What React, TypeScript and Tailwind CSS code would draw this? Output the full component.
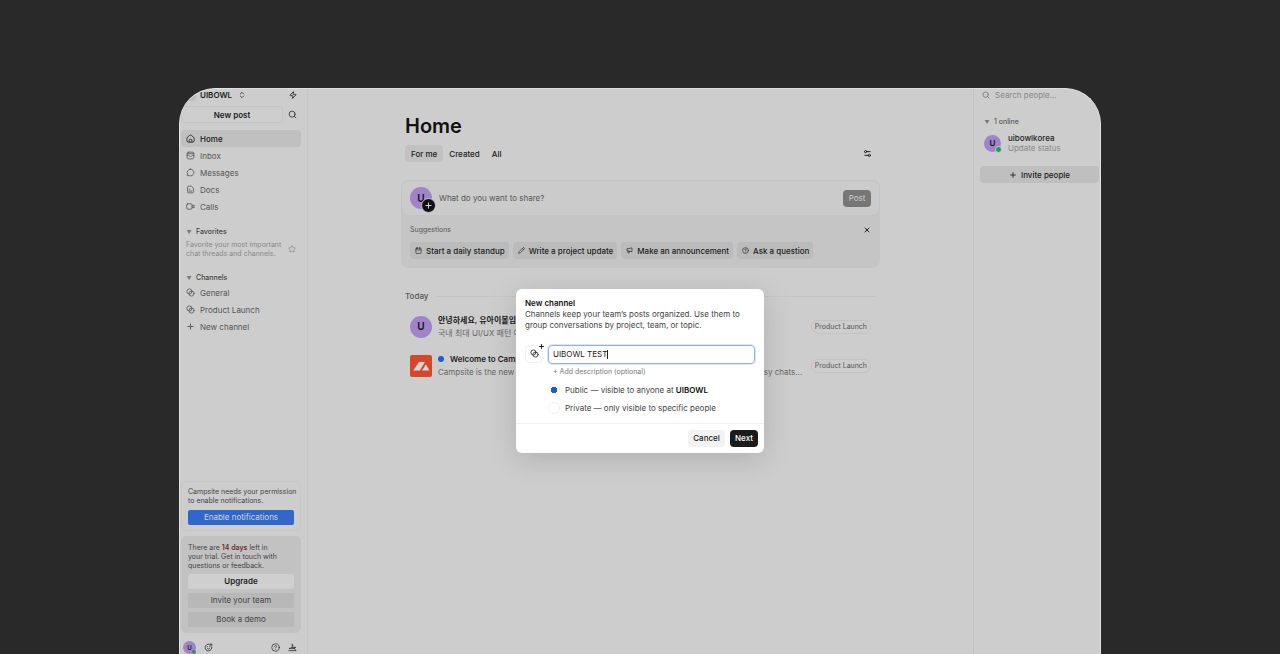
import { useState } from "react";
import type { ReactNode } from "react";
import {
  Calendar,
  ChevronsUpDown,
  CircleHelp,
  Pencil,
  Plus,
  Search,
  Settings2,
  Star,
  X,
  Zap,
} from "lucide-react";

interface IconProps {
  size?: number;
  children: ReactNode;
}

function Icon({ size = 9, children }: IconProps) {
  return (
    <svg
      width={size}
      height={size}
      viewBox="0 0 20 20"
      fill="none"
      stroke="currentColor"
      strokeWidth="1.8"
      strokeLinecap="round"
      strokeLinejoin="round"
      className="shrink-0"
      aria-hidden="true"
    >
      {children}
    </svg>
  );
}

function HomeIcon() {
  return (
    <Icon>
      <path d="M2 9.500a3 3 0 0 1 1.100-2.300l5-4.100a3 3 0 0 1 3.800 0l5 4.100A3 3 0 0 1 18 9.500V15a3 3 0 0 1-3 3H5a3 3 0 0 1-3-3z" />
      <path d="M7 18v-3.500a3 3 0 0 1 6 0V18" />
    </Icon>
  );
}

function InboxIcon() {
  return (
    <Icon>
      <rect x="2.500" y="2.500" width="15" height="15" rx="3.500" />
      <path d="M2.500 9.500h3.500c.8 0 1 2.700 4 2.700s3.200-2.700 4-2.700h3.500M3 6h14" />
    </Icon>
  );
}

function MessageIcon() {
  return (
    <Icon>
      <path d="M10 2.500a7.500 7.500 0 1 1-3.300 14.200L2.800 17.400l.8-3.700A7.500 7.500 0 0 1 10 2.500z" />
    </Icon>
  );
}

function DocIcon() {
  return (
    <Icon>
      <path d="M11 2.500H6A2.500 2.500 0 0 0 3.500 5v10A2.500 2.500 0 0 0 6 17.500h8a2.500 2.500 0 0 0 2.500-2.500V8z" />
      <path d="M7 9.500h1.500M7 13.500h6" />
    </Icon>
  );
}

function CallIcon() {
  return (
    <Icon>
      <rect x="1.500" y="4" width="12" height="12" rx="2.500" />
      <path d="M13.500 9 18 7v6l-4.500-2" />
    </Icon>
  );
}

function ChannelIcon() {
  return (
    <Icon>
      <circle cx="7.700" cy="7.700" r="5.700" />
      <circle cx="12.300" cy="12.300" r="5.700" />
    </Icon>
  );
}

function AnnounceIcon() {
  return (
    <Icon size={7}>
      <path d="M6 4.500 17 2.500v11l-11-2H4.500a2 2 0 0 1-2-2v-3a2 2 0 0 1 2-2zM5.500 11.500v4a2 2 0 0 0 4 0v-3" />
    </Icon>
  );
}

function StatusIcon() {
  return (
    <Icon>
      <path d="M11.500 2.700A7.500 7.500 0 1 0 17.300 8.500M15.500 1.500v5M13 4h5" />
      <path d="M7 12c1.500 2 4.500 2 6 0M7.500 8v.3M12.500 8v.3" />
    </Icon>
  );
}

function CampsiteIcon() {
  return (
    <Icon>
      <path d="M9.500 2.500v8M9.500 4l3 3M3 12l6.500-2H17M3 12.500h11l4 4.500H2M14 12.500l3-2.500" />
    </Icon>
  );
}

interface AvatarProps {
  className: string;
  children?: ReactNode;
}

function Avatar({ className, children }: AvatarProps) {
  return (
    <div
      className={`relative flex shrink-0 items-center justify-center rounded-full bg-[#a183cb] font-semibold text-[#111] ${className}`}
    >
      U{children}
    </div>
  );
}

const navItems = [
  { label: "Home", icon: <HomeIcon />, active: true },
  { label: "Inbox", icon: <InboxIcon /> },
  { label: "Messages", icon: <MessageIcon /> },
  { label: "Docs", icon: <DocIcon /> },
  { label: "Calls", icon: <CallIcon /> },
];

const channels = [
  { label: "General", icon: <ChannelIcon /> },
  { label: "Product Launch", icon: <ChannelIcon /> },
  { label: "New channel", icon: <Plus size={9} strokeWidth={2.5} /> },
];

const suggestions = [
  { label: "Start a daily standup", icon: <Calendar size={7} strokeWidth={2} /> },
  { label: "Write a project update", icon: <Pencil size={7} strokeWidth={2} /> },
  { label: "Make an announcement", icon: <AnnounceIcon /> },
  { label: "Ask a question", icon: <CircleHelp size={7} strokeWidth={2} /> },
];

interface NavLinkProps {
  label: string;
  icon: ReactNode;
  active?: boolean;
}

function NavLink({ label, icon, active }: NavLinkProps) {
  return (
    <a
      href="#"
      className={`flex h-[17px] items-center gap-[5px] rounded pl-[5px] ${
        active ? "bg-[#c0c0c0] font-medium text-[#1c1c1c]" : "text-[#555]"
      }`}
    >
      {icon}
      {label}
    </a>
  );
}

function GroupTitle({ children }: { children: ReactNode }) {
  return (
    <h2 className="flex h-[11px] items-center gap-[3px] pl-1 text-[7px] font-medium text-[#444]">
      <span className="w-2 text-center text-[5px] text-[#777]">▼</span>
      {children}
    </h2>
  );
}

function Sidebar() {
  return (
    <aside className="flex w-[128px] shrink-0 flex-col border-r border-[#c6c6c6] pr-1.5 pl-px">
      <div className="flex h-3 items-center pr-1 pl-1">
        <span className="flex size-[11px] items-center justify-center rounded-sm bg-[#bbb] text-[6px] text-[#8a4a3a]">
          U
        </span>
        <span className="ml-1 font-semibold text-[#1c1c1c]">UIBOWL</span>
        <ChevronsUpDown size={8} strokeWidth={2.5} className="ml-1.5 text-[#333]" />
        <Zap size={8} strokeWidth={2.5} className="ml-auto text-[#222]" />
      </div>

      <div className="mt-[5px] flex items-center justify-between pr-1">
        <button className="h-[17px] w-[102px] rounded border border-[#c4c4c4] bg-[#cecece] font-semibold text-[#1c1c1c]">
          New post
        </button>
        <Search size={9} className="text-[#222]" />
      </div>

      <nav className="mt-[7px]">
        {navItems.map((item) => (
          <NavLink key={item.label} {...item} />
        ))}
      </nav>

      <section className="mt-3">
        <GroupTitle>Favorites</GroupTitle>
        <div className="mt-0.5 flex items-center justify-between pr-[5px] pl-[5px] text-[7px] leading-[9px] text-[#888]">
          <p className="whitespace-nowrap">
            Favorite your most important
            <br />
            chat threads and channels.
          </p>
          <Star size={8} className="shrink-0" />
        </div>
      </section>

      <section className="mt-[15px]">
        <GroupTitle>Channels</GroupTitle>
        <nav>
          {channels.map((item) => (
            <NavLink key={item.label} {...item} />
          ))}
        </nav>
      </section>

      <div className="mt-auto rounded-md border border-[#c6c6c6] px-1.5 py-[5px] text-[7px] leading-[9px] text-[#444]">
        <p className="whitespace-nowrap">
          Campsite needs your permission
          <br />
          to enable notifications.
        </p>
        <button className="mt-[5px] h-[15px] w-full rounded-xs bg-[#2f67cb] text-[8px] text-[#d5d5d5]">
          Enable notifications
        </button>
      </div>

      <div className="mt-[5px] flex flex-col gap-1 rounded-md bg-[#c2c2c2] px-[7px] pt-[7px] pb-1.5 text-[7px] leading-[9px] text-[#444]">
        <p>
          There are <b className="font-semibold text-[#6b2d22]">14 days</b> left in
          <br />
          your trial. Get in touch with
          <br />
          questions or feedback.
        </p>
        <button className="h-[15px] rounded-xs bg-[#cfcfcf] text-[8px] font-semibold text-[#1c1c1c]">
          Upgrade
        </button>
        <button className="h-[15px] rounded-xs bg-[#b8b8b8] text-[8px]">
          Invite your team
        </button>
        <button className="h-[15px] rounded-xs bg-[#b8b8b8] text-[8px]">
          Book a demo
        </button>
      </div>

      <div className="mt-[7px] flex h-[14px] items-center gap-2 pr-1 pl-0.5 text-[#333]">
        <Avatar className="size-[13px] text-[6px]">
          <span className="absolute right-0 bottom-0 size-1 rounded-full bg-[#1b9e49]" />
        </Avatar>
        <StatusIcon />
        <CircleHelp size={9} className="ml-auto" />
        <CampsiteIcon />
      </div>
    </aside>
  );
}

function Composer() {
  return (
    <section className="mt-[18px] rounded-lg bg-[#c5c5c5]">
      <div className="flex h-9 items-center rounded-lg border border-[#c3c3c3] bg-[#cbcbcb] px-2">
        <Avatar className="size-[22px] text-[10px]">
          <span className="absolute -right-1 -bottom-1 flex size-[15px] items-center justify-center rounded-full border border-[#cbcbcb] bg-[#111] text-[#ddd]">
            <Plus size={9} strokeWidth={2.5} />
          </span>
        </Avatar>
        <span className="ml-[7px] text-[8px] text-[#555]">
          What do you want to share?
        </span>
        <button className="ml-auto h-[17px] w-7 rounded bg-[#767676] text-[#cfcfcf]">
          Post
        </button>
      </div>
      <div className="px-[9px] pt-[7px] pb-[9px]">
        <div className="flex h-[14px] items-center justify-between text-[7px] text-[#555]">
          Suggestions
          <button aria-label="Dismiss">
            <X size={8} strokeWidth={3} className="text-[#222]" />
          </button>
        </div>
        <div className="mt-[5px] flex gap-1">
          {suggestions.map(({ label, icon }) => (
            <button
              key={label}
              className="flex h-[17px] items-center gap-1 rounded bg-[#bbb] pr-1 pl-[5px] font-medium whitespace-nowrap text-[#1c1c1c]"
            >
              {icon}
              {label}
            </button>
          ))}
        </div>
      </div>
    </section>
  );
}

function Tag() {
  return (
    <span className="shrink-0 rounded-full border border-[#c3c3c3] px-[3px] text-[7px] leading-[12px] text-[#555]">
      Product Launch
    </span>
  );
}

function Posts() {
  return (
    <section className="mt-[21px]">
      <div className="flex h-[14px] items-center gap-2 px-1 font-medium text-[#555]">
        Today
        <span className="h-px flex-1 bg-[#c4c4c4]" />
      </div>
      <article className="mt-3 flex h-[23px] items-center px-[9px]">
        <Avatar className="size-[22px] text-[10px]" />
        <div className="ml-1.5 min-w-0 flex-1 leading-[13px] whitespace-nowrap">
          <h3 className="font-semibold text-[#1c1c1c]">안녕하세요, 유아이볼입니다.</h3>
          <p className="text-[#666]">국내 최대 UI/UX 패턴 아카이브</p>
        </div>
        <Tag />
      </article>
      <article className="mt-4 flex h-[23px] items-center px-[9px]">
        <svg width="22" height="22" viewBox="0 0 22 22" className="shrink-0" aria-hidden="true">
          <rect width="22" height="22" rx="2" fill="#d4472a" />
          <path d="M9 7h6L9.800 15.500H3.300z" fill="#d6d6d6" />
          <path d="M16 9.200 19.300 15.500H12z" fill="#d6d6d6" />
        </svg>
        <div className="ml-1.5 min-w-0 flex-1 leading-[13px] whitespace-nowrap">
          <h3 className="flex items-center gap-1.5 font-semibold text-[#1c1c1c]">
            <span className="size-1.5 rounded-full bg-[#1c5fc6]" />
            Welcome to Campsite
          </h3>
          <p className="text-[#666]">
            Campsite is the new standard for thoughtful team communication, with threads and easy chats...
          </p>
        </div>
        <Tag />
      </article>
    </section>
  );
}

function People() {
  return (
    <aside className="w-[127px] shrink-0 border-l border-[#c1c1c1] pr-px pl-1.5">
      <label className="flex h-3 items-center gap-[5px] pl-0.5 text-[#777]">
        <Search size={8} strokeWidth={2.5} className="shrink-0" />
        <input
          aria-label="Search people"
          placeholder="Search people..."
          className="w-full bg-transparent placeholder:text-[#888]"
        />
      </label>
      <div className="mt-[15px] flex h-[13px] items-center gap-[3px] pl-[3px] text-[7px] text-[#444]">
        <span className="w-2 text-center text-[5px] text-[#777]">▼</span>1 online
      </div>
      <div className="mt-0.5 flex h-6 items-center gap-[7px] pl-1">
        <Avatar className="size-[17px] text-[8px]">
          <span className="absolute -right-px -bottom-px size-[7px] rounded-full border border-[#cdcdcd] bg-[#1b9e49]" />
        </Avatar>
        <div className="leading-[10px]">
          <p className="font-medium text-[#1c1c1c]">uibowlkorea</p>
          <p className="text-[#888]">Update status</p>
        </div>
      </div>
      <button className="mt-[11px] flex h-[17px] w-full items-center justify-center gap-1 rounded bg-[#bfbfbf] font-medium text-[#1c1c1c]">
        <Plus size={8} strokeWidth={2.5} />
        Invite people
      </button>
    </aside>
  );
}

function NewChannelDialog() {
  const [name, setName] = useState("UIBOWL TEST");
  const [visibility, setVisibility] = useState("public");

  const radioClass =
    "size-3 appearance-none rounded-full border border-[#f0f0f0] bg-white checked:bg-[radial-gradient(circle,#1c5fc6_3px,transparent_3px)]";

  return (
    <div className="absolute inset-0 flex items-center justify-center pb-0.5">
      <div
        role="dialog"
        aria-labelledby="dialog-title"
        className="w-[248px] rounded-md bg-white text-[#444] shadow-[0_6px_30px_rgba(0,0,0,0.14)]"
      >
        <div className="px-[9px] pt-[9px] pb-2">
          <h2 id="dialog-title" className="leading-[11px] font-semibold text-[#111]">
            New channel
          </h2>
          <p className="leading-[11px]">
            Channels keep your team’s posts organized. Use them to
            <br />
            group conversations by project, team, or topic.
          </p>

          <div className="mt-[14px] flex gap-[5px]">
            <button
              aria-label="Choose icon"
              className="relative flex size-[18px] items-center justify-center rounded border border-[#f2f2f2] text-[#222]"
            >
              <ChannelIcon />
              <span className="absolute -top-[3px] -right-[3px] flex size-2 items-center justify-center rounded-full bg-white">
                <Plus size={7} strokeWidth={3.5} />
              </span>
            </button>
            <div className="relative flex-1">
              <input
                aria-label="Channel name"
                value={name}
                onChange={(e) => setName(e.target.value)}
                className="h-[19px] w-full rounded border border-[#8fb0f0] px-1 text-[#222] caret-transparent ring-1 ring-[#dbe6fb] outline-none"
              />
              {/* text cursor */}
              <span className="absolute top-[5px] left-[59px] h-[9px] w-px bg-[#222]" />
            </div>
          </div>

          <div className="pl-[23px]">
            <button className="mt-[3px] flex h-[11px] items-center pl-[5px] text-[7px] text-[#777]">
              + Add description (optional)
            </button>
            <label className="mt-1.5 flex h-[13px] items-center gap-[5px]">
              <input
                type="radio"
                name="visibility"
                checked={visibility === "public"}
                onChange={() => setVisibility("public")}
                className={radioClass}
              />
              <span>
                Public — visible to anyone at{" "}
                <b className="font-semibold text-[#111]">UIBOWL</b>
              </span>
            </label>
            <label className="mt-[5px] flex h-[13px] items-center gap-[5px]">
              <input
                type="radio"
                name="visibility"
                checked={visibility === "private"}
                onChange={() => setVisibility("private")}
                className={radioClass}
              />
              <span>Private — only visible to specific people</span>
            </label>
          </div>
        </div>

        <div className="flex justify-end gap-[5px] border-t border-[#f1f1f1] px-1.5 py-1.5 font-medium">
          <button className="h-[17px] w-[37px] rounded bg-[#f2f2f3] text-[#1c1c1c]">
            Cancel
          </button>
          <button className="h-[17px] w-7 rounded bg-[#1b1b1b] text-white">
            Next
          </button>
        </div>
      </div>
    </div>
  );
}

export default function App() {
  return (
    <div className="h-screen overflow-hidden bg-[#292929] px-[179px] pt-[88px] font-['Inter','Noto_Sans_CJK_KR',sans-serif] text-[8px]">
      <div className="relative flex h-full overflow-hidden rounded-t-[36px] border-t border-r border-l border-[#e0e0e0] bg-[#cdcdcd]">
        <Sidebar />
        <main className="min-w-0 flex-1 px-[93px] pt-[23px]">
          <h1 className="px-1 text-[20px] leading-[28px] font-semibold text-[#111]">Home</h1>
          <div className="mt-[5px] flex items-center px-1 font-medium text-[#1c1c1c]">
            <button className="h-[17px] rounded bg-[#c1c1c1] px-1.5">For me</button>
            <button className="h-[17px] px-1.5">Created</button>
            <button className="h-[17px] px-1.5">All</button>
            <button aria-label="Filter" className="mr-1 ml-auto">
              <Settings2 size={9} strokeWidth={2.5} />
            </button>
          </div>
          <Composer />
          <Posts />
        </main>
        <People />
        <NewChannelDialog />
      </div>
    </div>
  );
}
